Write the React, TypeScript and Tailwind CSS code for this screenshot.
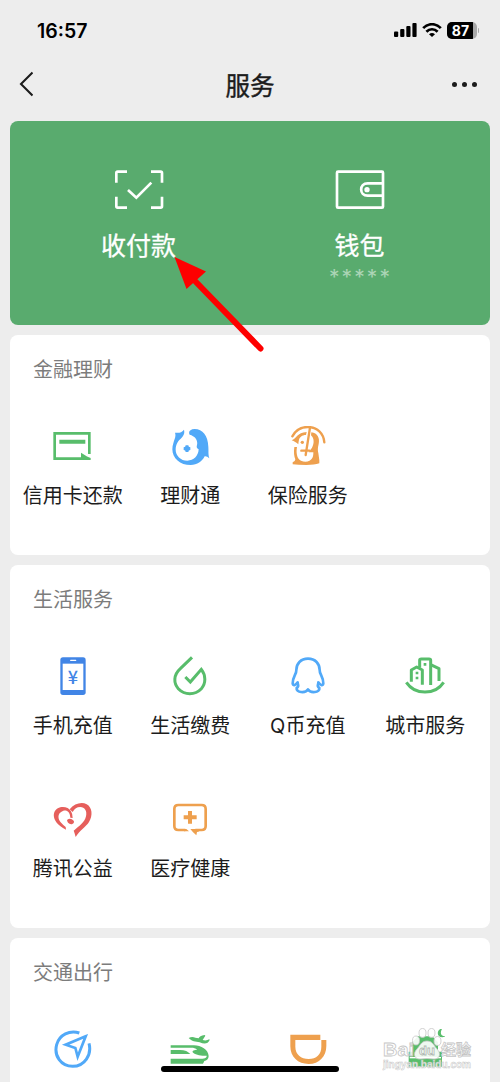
import React from 'react';

const BackIcon = () => (
  <svg className="-ml-[3px] h-7 w-4" viewBox="0 0 16 28" fill="none">
    <path d="M15.500 2.500 4 14l11.500 11.500" stroke="#1c1c1c" strokeWidth="2.1" />
  </svg>
);

const ScanIcon = () => (
  <svg className="h-10 w-[50px]" viewBox="0 0 150 120" fill="none" stroke="#fff" strokeWidth="8">
    <path d="M7 38V9q0-4 4-4h28M111 5h29q4 0 4 4v29M144 80v29q0 4-4 4h-29M39 113H11q-4 0-4-4V80" />
    <path d="M42 60l25 23 45-45" />
  </svg>
);

const WalletIcon = () => (
  <svg className="h-10 w-[50px]" viewBox="0 0 150 120" fill="none" stroke="#fff" strokeWidth="8">
    <rect x="6" y="5" width="138" height="108" rx="3" />
    <path d="M144 40H98c-26 0-26 37 0 37h46" />
    <circle cx="96" cy="59" r="8" fill="#fff" stroke="none" />
  </svg>
);

const Icon = ({ children }: { children: React.ReactNode }) => (
  <svg className="h-10 w-10 shrink-0" viewBox="0 0 120 120" fill="none">
    {children}
  </svg>
);

const CardIcon = () => (
  <Icon>
    <path d="M109 84V22H5v76h80" stroke="#58bd6b" strokeWidth="8" />
    <path d="M19 41h78v12H19zM84 80l11 7q5 5 18 9v6H84z" fill="#58bd6b" />
  </Icon>
);

const FishIcon = () => (
  <Icon>
    <path
      d="M42 11C34 19 29 22 15 20c4 12-2 20-5 32-12 36 14 65 52 65 20 0 34-10 42-26 5-1 9 2 14 6-4-12-2-20-3-35C114 29 98 9 74 9c-14 0-20 9-15 17 18 5 25 18 22 31-2 7-1 9 5 13-1 20-15 34-34 34-20 0-35-15-35-33 0-17 8-27 18-36 8-8 9-15 7-24z"
      fill="#51a9f8"
    />
    <path d="M47 58h8q0 6 6 6v8q-6 0-6 6h-8q0-6-6-6v-8q6 0 6-6z" fill="#51a9f8" />
  </Icon>
);

const InsuranceIcon = () => (
  <Icon>
    <path d="M13 31C23 12 40 3 59 3c29 0 48 19 50 46" stroke="#eea04e" strokeWidth="7" strokeLinecap="round" />
    <path
      d="M11 43C25 39 27 19 56 18l-2 9c-12 0-19 7-21 14-1 5-2 11-2 14-6-5-12-9-20-12zM70 19c19 2 26 18 22 35-3 12-3 20-1 27l3 22v9q-15 5-39 5-25 0-41-2v-6q8-3 8-9-6-14-3-37h8c-3 15-1 36 12 41 13 6 28 3 34-8 3-6 3-12 3-17H62l10-14c7-12 7-29-3-37z"
      fill="#eea04e"
    />
    <circle cx="43" cy="49" r="5" fill="#eea04e" />
    <path d="M66 5L53 87M40 74h24" stroke="#eea04e" strokeWidth="7" strokeLinecap="round" />
  </Icon>
);

const PhoneIcon = () => (
  <Icon>
    <rect x="22" y="4" width="76" height="113" rx="8" fill="#4185e6" />
    <path d="M29 23h62v79H29z" fill="#fff" />
    <path d="M53 13h15" stroke="#fff" strokeWidth="4" strokeLinecap="round" />
    <text
      x="60"
      y="83"
      textAnchor="middle"
      fontSize="54"
      className="font-['Noto_Sans_CJK_SC',sans-serif] font-medium"
      fill="#4185e6"
    >
      ¥
    </text>
  </Icon>
);

const DropIcon = () => (
  <Icon>
    <path
      d="M66 4L31 38C9 58 11 82 25 98c19 20 50 20 69 0 14-16 14-40 0-58L61 78 46 63"
      stroke="#58bd6b"
      strokeWidth="9"
    />
  </Icon>
);

const QQIcon = () => (
  <Icon>
    <path
      d="M60 8C38 8 25 23 25 42c1 12-12 22-11 40 1 10 10 4 15-3 0 10 6 12-3 17-3 14 27 17 34 4 7 13 37 10 34-4-9-5-3-7-3-17 5 7 14 13 15 3 1-18-12-28-11-40C95 23 82 8 60 8z"
      stroke="#51a9f8"
      strokeWidth="8"
      strokeLinejoin="round"
    />
  </Icon>
);

const CityIcon = () => (
  <Icon>
    <g stroke="#58bd6b" strokeWidth="9" strokeLinejoin="round">
      <path d="M4 79c26 39 86 39 112 0" />
      <path d="M19 77V42l16-9 17 9v44" />
      <path d="M44 35V13q0-4 5-4h23q5 0 5 4v74" />
      <path d="M77 26l25 12v37" />
    </g>
    <path d="M32 47h8v8h-8zM32 62h8v8h-8zM56 21h8v8h-8z" fill="#58bd6b" />
  </Icon>
);

const HeartIcon = () => (
  <Icon>
    <path
      d="M39 92C8 77-2 55 4 40 12 19 45 19 54 37q5 8 5 20l-7-1C51 39 42 32 31 35 12 42 14 59 23 70q7 8 15 14z"
      fill="#e65f5c"
    />
    <path
      d="M50 31C64 13 87 8 101 16c17 9 19 34 7 53-8 13-28 26-40 45-2-8-4-14-6-19 16-13 33-25 37-43 4-16-4-28-17-28-11 0-17 5-23 15z"
      fill="#e65f5c"
    />
    <path d="M42 63q10-8 20 2c4 6-4 12-11 10-6-2-8-6-9-12z" fill="#e65f5c" />
  </Icon>
);

const MedicalIcon = () => (
  <Icon>
    <path
      d="M46 93H25q-12 0-12-12V30q0-12 12-12h70q12 0 12 12v51q0 12-12 12H76"
      stroke="#eea04e"
      strokeWidth="8"
    />
    <path d="M54 36h12v13h14v12H66v13H54V61H41V49h13zM61 90h30q-2 9-10 9l-2 10q-10-8-18-19zM42 90h7l8 7H42z" fill="#eea04e" />
  </Icon>
);

const CompassIcon = () => (
  <Icon>
    <path d="M79 12C50 2 19 18 11 47c-9 33 13 65 48 65 36 0 58-35 49-69" stroke="#51a9f8" strokeWidth="9" />
    <path d="M98 22L38 47l29 10 7 26z" stroke="#51a9f8" strokeWidth="8" />
  </Icon>
);

const TrainIcon = () => (
  <Icon>
    <path
      d="M2 49h70c21 0 43 13 44 32 0 9-6 14-13 15l-4 8H2V89h84c18 0 24-1 24-9-15 2-36-3-42-10-2-5 5-8 14-8-5-5-12-6-17-6H2z"
      fill="#58bd6b"
    />
    <path d="M2 63h28c14 0 25 5 31 12H2z" fill="#58bd6b" />
    <path
      d="M56 27q10-6 20-1l10 2q2-7 18-10l2 2-8 13q11 3 20-2l1 2c-5 12-16 13-30 7-12-2-24-3-33-13z"
      fill="#58bd6b"
    />
  </Icon>
);

const DidiIcon = () => (
  <Icon>
    <path d="M7 17h90v16h18v18c0 31-21 54-53 54S7 84 7 52zM22 33v20c0 23 17 37 40 37s38-14 38-37V33z" fill="#eea04e" fillRule="evenodd" />
  </Icon>
);

const HotelIcon = () => (
  <Icon>
    <path d="M22 40l16-18h44l17 18v28h12v45H11V68h11z" fill="#58bd6b" />
    <path d="M14 86h94" stroke="#fff" strokeWidth="4" />
    <path d="M112-2c-22 4-17 37 12 24-16 1-21-9-12-24z" fill="#58bd6b" />
  </Icon>
);

interface Service {
  name: string;
  icon: React.ReactNode;
}

const finance: Service[] = [
  { name: '信用卡还款', icon: <CardIcon /> },
  { name: '理财通', icon: <FishIcon /> },
  { name: '保险服务', icon: <InsuranceIcon /> },
];

const life: Service[] = [
  { name: '手机充值', icon: <PhoneIcon /> },
  { name: '生活缴费', icon: <DropIcon /> },
  { name: 'Q币充值', icon: <QQIcon /> },
  { name: '城市服务', icon: <CityIcon /> },
  { name: '腾讯公益', icon: <HeartIcon /> },
  { name: '医疗健康', icon: <MedicalIcon /> },
];

const travel: Service[] = [
  { name: '', icon: <CompassIcon /> },
  { name: '', icon: <TrainIcon /> },
  { name: '', icon: <DidiIcon /> },
  { name: '', icon: <HotelIcon /> },
];

const Section = ({ title, items, className }: { title: string; items: Service[]; className: string }) => (
  <section className={`mt-2.5 shrink-0 rounded-lg bg-white pr-1.5 pl-1 pt-5 ${className}`}>
    <h2 className="pl-[19px] text-[20px] leading-[30px] text-[#7c7c7c]">{title}</h2>
    <div className="mt-[41px] grid grid-cols-4 gap-y-[58px]">
      {items.map((item, i) => (
        <div key={i} className="flex flex-col items-center">
          {item.icon}
          {item.name && (
            <span className="mt-[15px] text-[20px] leading-[30px] whitespace-nowrap text-[#1c1c1c]">{item.name}</span>
          )}
        </div>
      ))}
    </div>
  </section>
);

const StatusBar = () => (
  <div className="flex h-[60px] shrink-0 items-center justify-between pr-[21px] pl-[37px]">
    <span className="pt-[3px] font-[Inter,sans-serif] text-[19.5px] font-semibold text-black">16:57</span>
    <div className="flex items-center">
      <svg className="h-[14px] w-[23px]" viewBox="0 0 23 14">
        <rect x="0" y="8.5" width="4.2" height="5.5" rx="1" />
        <rect x="6.2" y="6" width="4.2" height="8" rx="1" />
        <rect x="12.3" y="3" width="4.2" height="11" rx="1" />
        <rect x="18.4" y="0" width="4.2" height="14" rx="1" />
      </svg>
      <svg className="ml-[5px] h-[14px] w-5" viewBox="0 0 20 14" fill="none" stroke="#000" strokeWidth="2.7">
        <path d="M1.2 5.2C6-.1 14 -.1 18.8 5.2M4.4 8.7c3.2-3.3 8-3.3 11.2 0" />
        <path d="M7 11.3q3-2.4 6 0l-3 2.700z" fill="#000" stroke="none" />
      </svg>
      <div className="ml-[5px] flex h-[17px] w-[30px] overflow-hidden rounded-[5px] bg-[#a8a8a8]">
        <span className="w-[26px] bg-black pl-0.5 text-center font-[Inter,sans-serif] text-[14px] leading-[17px] font-bold text-white">
          87
        </span>
      </div>
      <div className="ml-px h-[5px] w-[1.5px] rounded-r bg-[#a8a8a8]" />
    </div>
  </div>
);

const Watermark = () => (
  <div className="absolute top-[1024px] left-[382px] h-[50px] w-[92px]">
    <svg className="h-full w-full" viewBox="0 0 92 50" stroke="#c6c6c6" strokeWidth=".8" fill="#fff">
      <g fillOpacity=".9">
        <ellipse cx="34" cy="16.500" rx="3.500" ry="4.500" />
        <ellipse cx="40.500" cy="9" rx="3.500" ry="4.500" />
        <ellipse cx="49.500" cy="9" rx="3.500" ry="4.500" />
        <ellipse cx="55.500" cy="17" rx="3.500" ry="4.500" />
        <path d="M45 17c6 0 7 5 10 8 5 5 2 11-4 10q-6-1-12 0c-6 1-9-5-4-10 3-3 4-8 10-8z" />
      </g>
      <g className="font-['Liberation_Sans','Noto_Sans_CJK_SC',sans-serif] font-bold" fillOpacity=".85">
        <text x="1" y="31.500" fontSize="19" textLength="31" lengthAdjust="spacingAndGlyphs">
          Bai
        </text>
        <text x="37" y="31" fontSize="13" stroke="#b0b8b2">
          du
        </text>
        <text x="59" y="31" fontSize="15" textLength="30">
          经验
        </text>
        <text x="1" y="44" fontSize="10" strokeWidth=".5" textLength="88" lengthAdjust="spacingAndGlyphs">
          jingyan.baidu.com
        </text>
      </g>
    </svg>
  </div>
);

const App = () => (
  <div className="relative flex h-[1082px] w-[500px] flex-col overflow-hidden bg-[#ededed] font-[Inter,'Noto_Sans_CJK_SC',sans-serif]">
    <StatusBar />
    <header className="grid h-[61px] shrink-0 grid-cols-3 items-start px-5">
      <div className="pt-2.5">
        <BackIcon />
      </div>
      <h1 className="pt-0.5 text-center text-[24.5px] leading-[48px] text-[#1c1c1c] [-webkit-text-stroke:0.4px]">服务</h1>
      <div className="flex h-12 items-center justify-end gap-[5px] pr-[3px]">
        <span className="h-[5px] w-[5px] rounded-full bg-[#1c1c1c]" />
        <span className="h-[5px] w-[5px] rounded-full bg-[#1c1c1c]" />
        <span className="h-[5px] w-[5px] rounded-full bg-[#1c1c1c]" />
      </div>
    </header>

    <main className="flex shrink-0 flex-col px-2.5">
      <div className="grid h-[204px] shrink-0 grid-cols-2 rounded-lg bg-[#59ab6e] pr-5 pl-[18px] pt-[49px] text-white">
        <div className="flex flex-col items-center">
          <ScanIcon />
          <span className="mt-[18px] text-[25px] leading-9 [-webkit-text-stroke:0.3px]">收付款</span>
        </div>
        <div className="flex flex-col items-center">
          <WalletIcon />
          <span className="mt-[18px] text-[25px] leading-9 [-webkit-text-stroke:0.3px]">钱包</span>
          <span className="mt-0.5 pl-0.5 text-[21px] leading-6 tracking-[2.1px] text-white/50">*****</span>
        </div>
      </div>

      <Section title="金融理财" items={finance} className="h-[220px]" />
      <Section title="生活服务" items={life} className="h-[363px]" />
      <Section title="交通出行" items={travel} className="h-[160px]" />
    </main>

    <svg className="absolute top-[250px] left-[170px] h-[105px] w-[100px]" viewBox="0 0 100 105">
      <path d="M26 32l64.500 66.500" stroke="#fe0000" strokeWidth="6" strokeLinecap="round" />
      <path d="M4.500 7L36 21.500 16.500 39z" fill="#fe0000" />
    </svg>

    <div className="absolute top-[1066px] left-[161px] h-1.5 w-[178px] rounded-full bg-black" />
    <Watermark />
  </div>
);

export default App;
